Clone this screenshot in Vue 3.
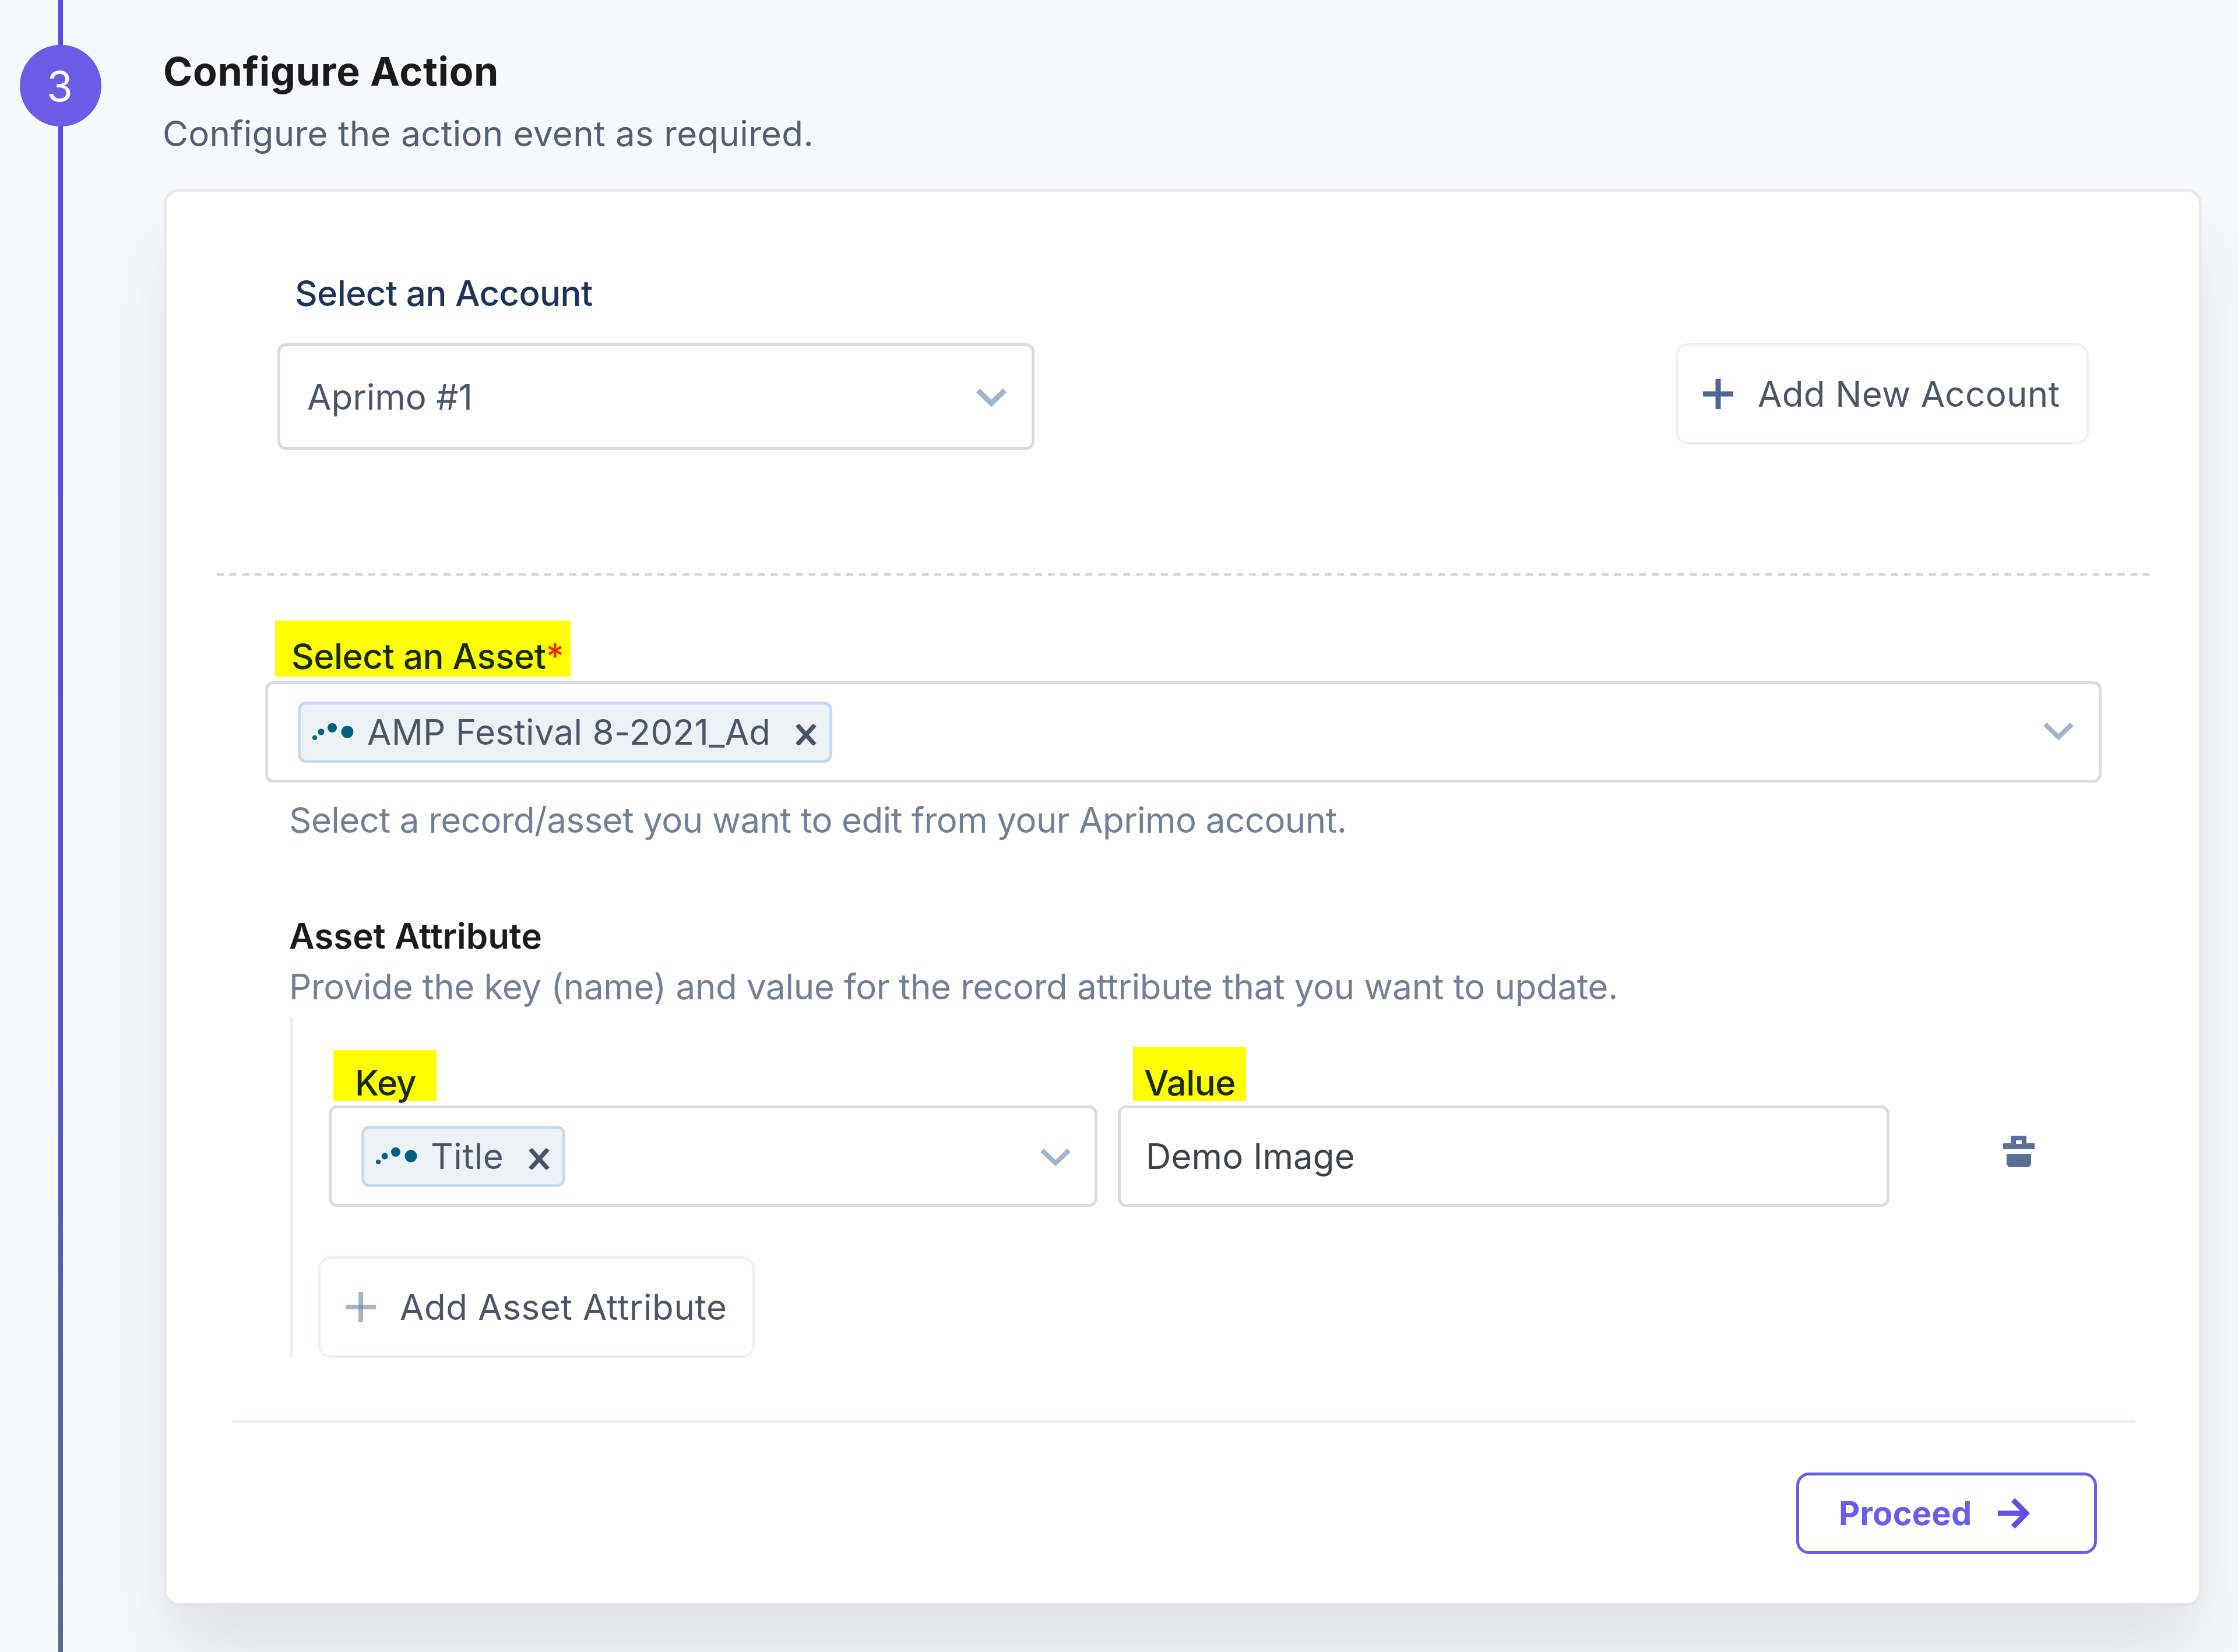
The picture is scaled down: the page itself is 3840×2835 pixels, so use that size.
<template>
  <div class="page">
    <!-- step rail -->
    <div class="rail">
      <span class="step-number">3</span>
    </div>

    <main class="content">
      <h1>Configure Action</h1>
      <p class="subtitle">Configure the action event as required.</p>

      <section class="card">
        <!-- account -->
        <div class="account">
          <div>
            <label class="account-label">Select an Account</label>
            <div class="select account-select">
              <span class="select-text">{{ account }}</span>
              <svg class="chevron chevron-bold" viewBox="0 0 54 34">
                <path d="M4 4L27 26L50 4" />
              </svg>
            </div>
          </div>
          <button class="btn btn-account">
            <svg class="plus" viewBox="0 0 52 52">
              <path d="M26 0V52M0 26H52" />
            </svg>
            <span>Add New Account</span>
          </button>
        </div>

        <svg class="dashed" viewBox="0 0 3317 5">
          <path d="M0 2.5H3317" />
        </svg>

        <!-- asset -->
        <div class="asset">
          <label class="mark mark-asset">Select an Asset<span class="required">*</span></label>
          <div class="select asset-select">
            <span class="chip">
              <svg class="dots" viewBox="0 0 72 34">
                <circle v-for="dot in dots" :key="dot.x" :cx="dot.x" :cy="dot.y" :r="dot.r" />
              </svg>
              <span class="chip-text">{{ asset }}</span>
              <svg class="close" viewBox="0 0 36 36">
                <path d="M3 1L33 35M33 1L3 35" />
              </svg>
            </span>
            <svg class="chevron" viewBox="0 0 54 34">
              <path d="M4 4L27 26L50 4" />
            </svg>
          </div>
          <p class="help help-asset">Select a record/asset you want to edit from your Aprimo account.</p>
        </div>

        <!-- attributes -->
        <div class="attributes">
          <h2>Asset Attribute</h2>
          <p class="help help-attribute">
            Provide the key (name) and value for the record attribute that you want to update.
          </p>
          <div class="group">
            <div class="row">
              <div class="field">
                <label class="mark mark-key">Key</label>
                <div class="select key-select">
                  <span class="chip">
                    <svg class="dots" viewBox="0 0 72 34">
                      <circle v-for="dot in dots" :key="dot.x" :cx="dot.x" :cy="dot.y" :r="dot.r" />
                    </svg>
                    <span class="chip-text chip-text-key">{{ attribute.key }}</span>
                    <svg class="close" viewBox="0 0 36 36">
                      <path d="M3 1L33 35M33 1L3 35" />
                    </svg>
                  </span>
                  <svg class="chevron chevron-key" viewBox="0 0 54 34">
                    <path d="M4 4L27 26L50 4" />
                  </svg>
                </div>
              </div>
              <div class="field">
                <label class="mark mark-value">Value</label>
                <div class="select value-input">{{ attribute.value }}</div>
              </div>
              <svg class="trash" viewBox="0 0 54 54">
                <path fill-rule="evenodd" d="M13 2Q13 0 15 0H38Q40 0 40 2V13H54V23H0V13H13ZM22 8V14H32V8Z" />
                <path d="M6 31H48V49L44 54H10L6 49Z" />
              </svg>
            </div>
            <button class="btn btn-attribute">
              <svg class="plus plus-light" viewBox="0 0 52 52">
                <path d="M26 0V52" />
                <path d="M0 26H52" />
              </svg>
              <span>Add Asset Attribute</span>
            </button>
          </div>
        </div>

        <div class="divider"></div>

        <button class="btn btn-proceed">
          <span>Proceed</span>
          <svg class="arrow" viewBox="0 0 54 54">
            <path d="M0 27H48M26 4L49 27L26 50" />
          </svg>
        </button>
      </section>
    </main>
  </div>
</template>

<script setup>
import { ref } from 'vue'

const account = ref('Aprimo #1')
const asset = ref('AMP Festival 8-2021_Ad')
const attribute = ref({ key: 'Title', value: 'Demo Image' })

const dots = [
  { x: 4, y: 27, r: 4 },
  { x: 15, y: 17, r: 5.5 },
  { x: 34, y: 10, r: 8 },
  { x: 60, y: 17, r: 10.5 },
]
</script>

<style>
body {
  background-color: #f8f9fe;
}
</style>

<style scoped>
.page {
  display: flex;
  width: 3840px;
  height: 2835px;
  overflow: hidden;
  background-color: #f8f9fe;
  font-family: Inter, 'Liberation Sans', sans-serif;
  font-size: 60px;
  line-height: 80px;
}

.page * {
  box-sizing: border-box;
}

h1,
h2,
p {
  margin: 0;
  white-space: nowrap;
}

label {
  display: block;
  white-space: nowrap;
}

.rail {
  width: 208px;
  padding: 77px 0 0 34px;
  background: linear-gradient(#5a4be0, #5a4fd8 50%, #546a90) 100px 0 / 8px 100% no-repeat;
}

.step-number {
  display: block;
  width: 140px;
  height: 140px;
  border-radius: 50%;
  padding-right: 3px;
  background-color: #6c5ce7;
  color: #fff;
  font-size: 72px;
  line-height: 142px;
  text-align: center;
}

.content {
  width: 3497px;
  margin-left: 73px;
  padding-top: 82px;
}

h1 {
  margin-left: -1px;
  color: #1b1b1b;
  font-size: 68px;
  font-weight: 700;
  letter-spacing: 0.7px;
}

.subtitle {
  margin: 27px 0 0 -2px;
  color: #525f70;
  letter-spacing: 0.32px;
}

.card {
  height: 2432px;
  margin-top: 55px;
  border: 5px solid #e9e9e9;
  border-bottom-color: #e4e5e7;
  border-radius: 26px;
  background-color: #fff;
  box-shadow: 0 85px 130px rgba(0, 0, 0, 0.1);
}

.select {
  display: flex;
  align-items: center;
  justify-content: space-between;
  border: 5px solid #dcdcdc;
  border-radius: 14px;
  background-color: #fff;
}

.chevron {
  width: 54px;
  height: 34px;
  fill: none;
  stroke: #a3b3cc;
  stroke-width: 8;
}

.chevron-bold {
  margin-top: 5px;
  stroke-width: 9;
}

.chevron-key {
  margin-top: 5px;
}

.account {
  display: flex;
  align-items: flex-end;
  justify-content: space-between;
  height: 443px;
  margin: 0 189px 0 190px;
}

.account-label {
  margin-left: 30px;
  color: #1f3358;
  font-weight: 500;
  letter-spacing: -0.65px;
}

.account-select {
  width: 1299px;
  height: 183px;
  margin-top: 46px;
  padding: 0 42px 0 46px;
  color: #4a5568;
}

.btn {
  display: flex;
  align-items: center;
  border: 4px solid #ecf0f8;
  border-radius: 22px;
  padding: 0;
  background-color: #fff;
  color: #4a5568;
  font-family: inherit;
  font-size: 60px;
  line-height: 80px;
  white-space: nowrap;
}

.btn-account {
  width: 709px;
  height: 174px;
  margin-bottom: 9px;
  padding-left: 43px;
  gap: 42px;
  letter-spacing: 0.35px;
}

.plus {
  width: 52px;
  height: 52px;
  fill: none;
  stroke: #4f6690;
  stroke-width: 9;
}

.plus-light {
  stroke: rgba(113, 134, 170, 0.62);
  stroke-width: 8;
}

.dashed {
  display: block;
  width: 3317px;
  height: 5px;
  margin: 211px 0 0 86px;
  fill: none;
  stroke: #d9d9d9;
  stroke-width: 5;
  stroke-dasharray: 12 9.6;
}

.asset {
  margin: 77px 0 0 169px;
}

.mark {
  background-color: #ff0;
  color: #1a2b00;
  font-weight: 500;
  line-height: 60px;
}

.mark-asset {
  width: 507px;
  height: 96px;
  margin-left: 17px;
  padding: 31px 0 0 28px;
  letter-spacing: -0.5px;
}

.required {
  color: #e82c00;
}

.asset-select {
  width: 3151px;
  height: 174px;
  margin-top: 8px;
  padding: 0 42px 0 51px;
}

.chip {
  display: flex;
  align-items: center;
  height: 105px;
  border: 5px solid #c5daf0;
  border-radius: 14px;
  padding: 0 22px 0 20px;
  background-color: #ecf1f6;
  color: #4a5568;
}

.dots {
  width: 72px;
  height: 34px;
  fill: #00607f;
}

.chip-text {
  margin-left: 22px;
  white-space: nowrap;
  letter-spacing: 0.25px;
}

.chip-text-key {
  letter-spacing: 0.6px;
}

.close {
  width: 36px;
  height: 36px;
  margin: 9px 0 0 43px;
  fill: none;
  stroke: #475366;
  stroke-width: 7.5;
}

.help {
  color: #718096;
}

.help-asset {
  margin: 24px 0 0 41px;
  letter-spacing: -0.56px;
}

.attributes {
  margin: 119px 0 0 210px;
}

h2 {
  color: #1b1b1b;
  font-size: 60px;
  font-weight: 600;
}

.help-attribute {
  margin-top: 7px;
  letter-spacing: -0.33px;
}

.group {
  height: 584px;
  margin: 12px 0 0 2px;
  border-left: 4px solid #eeeef0;
  padding-top: 52px;
}

.row {
  display: flex;
  height: 274px;
  margin-left: 62px;
}

.field + .field {
  margin-left: 35px;
}

.mark-key {
  width: 177px;
  height: 87px;
  margin: 5px 0 0 8px;
  padding: 26px 0 0 37px;
  letter-spacing: -1px;
}

.key-select {
  width: 1319px;
  height: 174px;
  margin-top: 8px;
  padding: 0 40px 0 51px;
}

.mark-value {
  width: 194px;
  height: 92px;
  margin-left: 26px;
  padding: 31px 0 0 19px;
  letter-spacing: -0.6px;
}

.value-input {
  width: 1324px;
  height: 174px;
  margin-top: 8px;
  padding-left: 43px;
  color: #3f4246;
  letter-spacing: 0.1px;
}

.trash {
  width: 54px;
  height: 54px;
  margin: 152px 0 0 195px;
  fill: #5a6f94;
}

.btn-attribute {
  width: 749px;
  height: 174px;
  margin: 85px 0 0 44px;
  padding-left: 43px;
  gap: 41px;
  letter-spacing: 0.6px;
}

.divider {
  width: 3265px;
  height: 5px;
  margin: 108px 0 0 112px;
  background-color: #ecf0f8;
}

.btn-proceed {
  width: 516px;
  height: 140px;
  margin: 85px 0 0 2796px;
  border: 5px solid #6c5ce7;
  padding-left: 68px;
  gap: 45px;
  color: #6c5ce7;
  font-size: 56px;
  font-weight: 700;
  letter-spacing: 0.2px;
}

.arrow {
  width: 54px;
  height: 54px;
  fill: none;
  stroke: #5f4fe3;
  stroke-width: 9;
}
</style>
